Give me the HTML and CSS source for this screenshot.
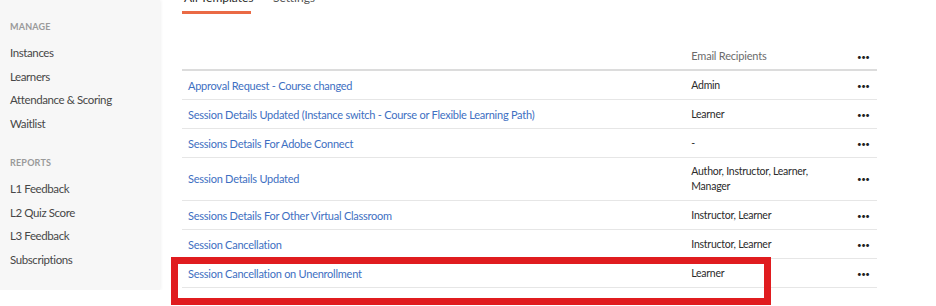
FILE: index.html
```html
<!DOCTYPE html>
<html lang="en">
<head>
    <meta charset="UTF-8">
    <title>Email Templates</title>
    <link rel="stylesheet" href="styles.css">
</head>
<body>
    <div class="layout">
        <aside class="sidebar">
            <div class="nav-title">MANAGE</div>
            <a class="nav-item" href="#">Instances</a>
            <a class="nav-item" href="#">Learners</a>
            <a class="nav-item" href="#">Attendance &amp; Scoring</a>
            <a class="nav-item" href="#">Waitlist</a>
            <div class="nav-title reports">REPORTS</div>
            <a class="nav-item" href="#">L1 Feedback</a>
            <a class="nav-item" href="#">L2 Quiz Score</a>
            <a class="nav-item" href="#">L3 Feedback</a>
            <a class="nav-item" href="#">Subscriptions</a>
        </aside>
        <main class="content">
            <div class="tabs">
                <span class="tab active">All Templates</span>
                <span class="tab">Settings</span>
            </div>
            <table class="templates">
                <thead>
                    <tr>
                        <th class="name"></th>
                        <th class="recipients">Email Recipients</th>
                        <th class="more"><span class="dots">&bull;&bull;&bull;</span></th>
                    </tr>
                </thead>
                <tbody>
                    <tr>
                        <td class="name"><a href="#">Approval Request - Course changed</a></td>
                        <td class="recipients">Admin</td>
                        <td class="more"><span class="dots">&bull;&bull;&bull;</span></td>
                    </tr>
                    <tr>
                        <td class="name"><a href="#">Session Details Updated (Instance switch - Course or Flexible Learning Path)</a></td>
                        <td class="recipients">Learner</td>
                        <td class="more"><span class="dots">&bull;&bull;&bull;</span></td>
                    </tr>
                    <tr>
                        <td class="name"><a href="#">Sessions Details For Adobe Connect</a></td>
                        <td class="recipients">-</td>
                        <td class="more"><span class="dots">&bull;&bull;&bull;</span></td>
                    </tr>
                    <tr class="tall">
                        <td class="name"><a href="#">Session Details Updated</a></td>
                        <td class="recipients">Author, Instructor, Learner, Manager</td>
                        <td class="more"><span class="dots">&bull;&bull;&bull;</span></td>
                    </tr>
                    <tr>
                        <td class="name"><a href="#">Sessions Details For Other Virtual Classroom</a></td>
                        <td class="recipients">Instructor, Learner</td>
                        <td class="more"><span class="dots">&bull;&bull;&bull;</span></td>
                    </tr>
                    <tr>
                        <td class="name"><a href="#">Session Cancellation</a></td>
                        <td class="recipients">Instructor, Learner</td>
                        <td class="more"><span class="dots">&bull;&bull;&bull;</span></td>
                    </tr>
                    <tr>
                        <td class="name"><a href="#">Session Cancellation on Unenrollment</a></td>
                        <td class="recipients">Learner</td>
                        <td class="more"><span class="dots">&bull;&bull;&bull;</span></td>
                    </tr>
                </tbody>
            </table>
        </main>
    </div>
    <div class="highlight"></div>
</body>
</html>
```

FILE: styles.css
```css
body {
    font-family: Lato, "Open Sans", sans-serif;
    margin: 0;
    padding: 0;
    background: #ffffff;
    color: #2b2b2b;
    overflow: hidden;
}
.layout {
    display: flex;
    align-items: flex-start;
}
.sidebar {
    width: 160px;
    height: 290px;
    flex-shrink: 0;
    box-sizing: border-box;
    padding: 20px 0 0 10px;
    background: #f7f7f7;
    box-shadow: 1px 0 3px rgba(0,0,0,0.06);
    display: flex;
    flex-direction: column;
}
.nav-title {
    font-size: 9px;
    font-weight: bold;
    color: #9a9a9a;
    letter-spacing: 0.2px;
    height: 14px;
    line-height: 14px;
    margin-bottom: 7px;
}
.nav-title.reports {
    margin-top: 21px;
    margin-bottom: 7px;
}
.nav-item {
    font-size: 11.5px;
    letter-spacing: -0.4px;
    color: #474747;
    text-decoration: none;
    height: 23.5px;
    line-height: 23.5px;
}
.content {
    flex: 1;
    padding-left: 22px;
}
.tabs {
    display: flex;
    gap: 20px;
    margin-top: -9px;
    height: 23px;
}
.tab {
    font-size: 12px;
    color: #555555;
    white-space: nowrap;
    padding: 0 0 0 2px;
    line-height: 14px;
    height: 20px;
}
.tab.active {
    width: 67px;
    border-bottom: 3px solid #ea6a45;
    color: #2b2b2b;
}
.templates {
    width: 695px;
    border-collapse: collapse;
    margin-top: 27px;
    font-size: 10.5px;
    letter-spacing: -0.25px;
}
.templates th {
    font-weight: normal;
    color: #6b6b6b;
    font-size: 11px;
    letter-spacing: -0.2px;
    height: 28px;
    text-align: left;
    border-bottom: 2px solid #dcdcdc;
    padding: 0 6px;
}
.templates td {
    height: 28px;
    padding: 0 6px;
    border-bottom: 1px solid #e6e6e6;
    vertical-align: middle;
}
.templates tr.tall td {
    height: 42px;
    line-height: 15px;
}
.templates td.name a {
    color: #3e6fc2;
    text-decoration: none;
    font-size: 11px;
}
.templates .name {
    width: 494px;
    padding-right: 9px;
}
.templates .recipients {
    width: 137px;
    padding-right: 30px;
    color: #2b2b2b;
}
.templates th.recipients {
    color: #6b6b6b;
}
.templates .more {
    width: 20px;
    text-align: left;
    padding: 0;
}
.dots {
    font-size: 8px;
    letter-spacing: -0.5px;
    color: #222222;
}
.highlight {
    position: absolute;
    left: 171px;
    top: 257px;
    width: 586px;
    height: 34px;
    border: 7px solid #e01c1f;
}
```
